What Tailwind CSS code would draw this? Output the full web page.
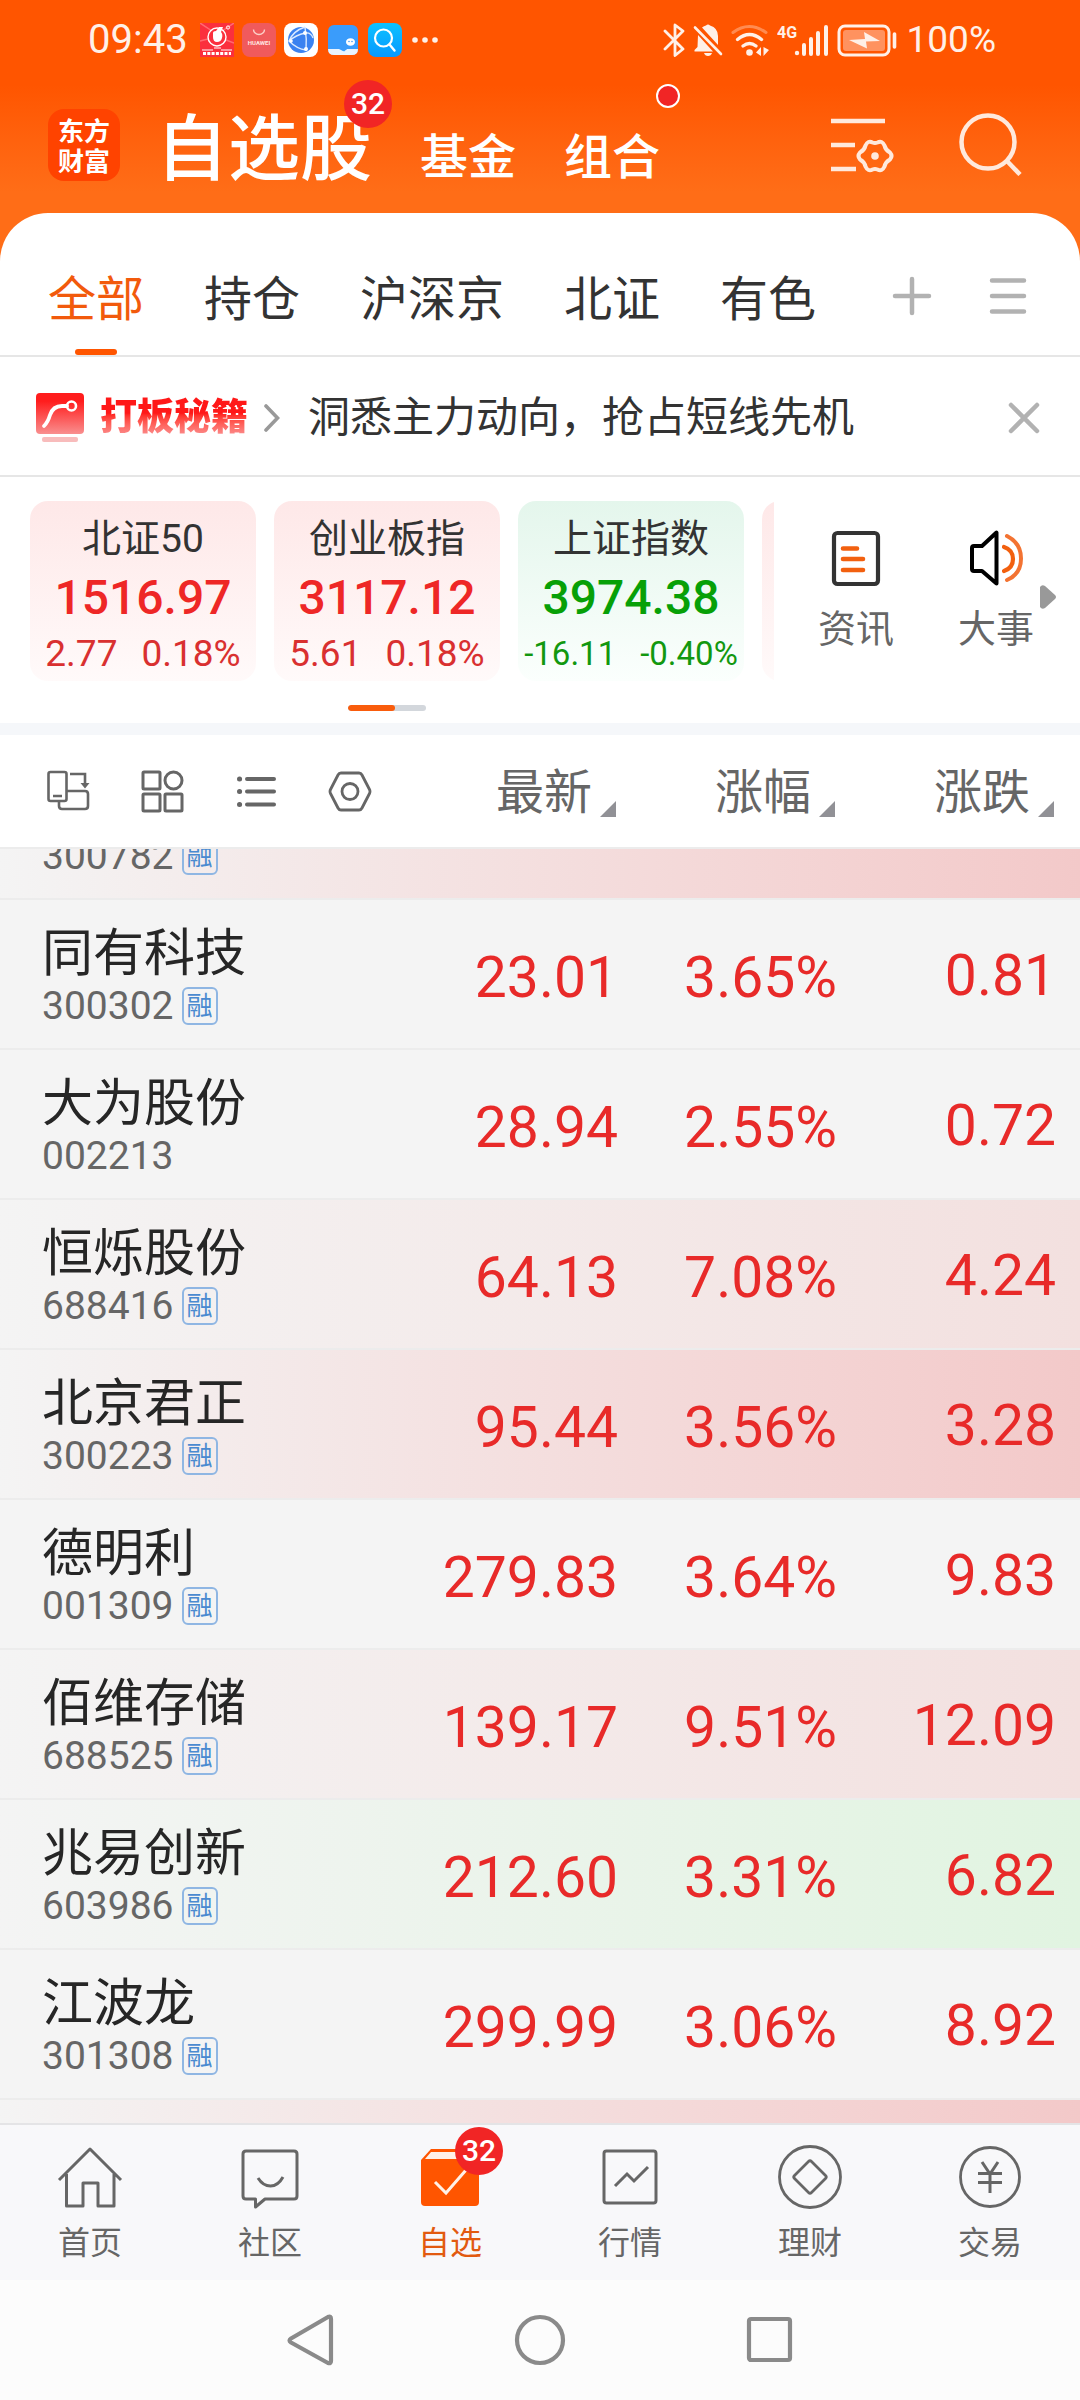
<!DOCTYPE html>
<html lang="zh-CN">
<head>
    <meta charset="UTF-8">
    <meta name="viewport" content="width=device-width, initial-scale=1.0">
    <title>自选股</title>
    <script src="https://cdn.jsdelivr.net/npm/@tailwindcss/browser@4"></script>
    <style>
      body {
        font-family: Roboto, "Noto Sans CJK SC", sans-serif;
      }
    </style>
</head>
<body class="h-screen flex flex-col overflow-hidden bg-white text-[#333]">

    <header class="bg-linear-to-b from-[#ff5500] from-40% to-[#ff6d17] to-90% text-white shrink-0">
        <!-- status bar -->
        <div class="h-20 flex items-center justify-between pl-[88px] pr-[84px] text-[#fff0e8]">
            <div class="flex items-center gap-2">
                <span class="text-[40px] leading-10 mr-1">09:43</span>
                <svg class="size-[34px]" viewBox="0 0 34 34">
                    <rect width="34" height="34" fill="#fb2f3d"/>
                    <path d="M0 0l12 8M34 0L22 8M0 18l8-2M34 20l-8-3" stroke="#ff6a70" stroke-width="1.5"/>
                    <circle cx="17" cy="14" r="9" fill="none" stroke="#fff" stroke-width="1.4"/>
                    <path d="M13 10q0-2 3-2l3-4h4l-2 5q2 2 1 6t-5 4q-4 0-4-5z" fill="#fff"/>
                    <circle cx="28" cy="4.500" r="1.600" fill="none" stroke="#fff"/>
                    <path d="M14 25h7M2 27h11M21 27h11" stroke="#fff" stroke-width="1.200"/>
                    <path d="M3 30.500h28" stroke="#fff" stroke-width="3" stroke-dasharray="3 1.300"/>
                </svg>
                <svg class="size-[34px]" viewBox="0 0 34 34">
                    <rect width="34" height="34" rx="8" fill="#f05a5c"/>
                    <path d="M11.500 6.500a5.500 5 0 0 0 11 0" fill="none" stroke="#fbd0c8" stroke-width="1.400"/>
                    <text x="17" y="22" text-anchor="middle" font-size="6" font-weight="700" fill="#ffe6e0">HUAWEI</text>
                </svg>
                <svg class="size-[34px]" viewBox="0 0 34 34">
                    <rect width="34" height="34" rx="8" fill="#fff"/>
                    <circle cx="17" cy="17" r="13" fill="#3b82f0"/>
                    <g fill="none" stroke="#dcebff" stroke-width="1.400">
                        <path d="M21 4Q9 8 5 18M21 10Q12 12 5 18Q13 26 22 27M21 4q2 12 1 24M21 10q6-1 8 5"/>
                    </g>
                    <g fill="#fff"><circle cx="21" cy="10" r="2"/><circle cx="7" cy="18" r="1.800"/><circle cx="22" cy="26" r="2"/></g>
                </svg>
                <svg class="size-[34px]" viewBox="0 0 34 34">
                    <rect x="2" y="2" width="30" height="30" rx="6" fill="#3a9cfb"/>
                    <path d="M2 26h11l4 2 4-2h11q0 6-6 6H8q-6 0-6-6z" fill="#eaf4ff"/>
                    <path d="M15 26h6l-3 2.500z" fill="#3a9cfb"/>
                    <ellipse cx="24.500" cy="19" rx="4.500" ry="3.800" fill="#fff"/>
                    <circle cx="23" cy="18.500" r=".8" fill="#3a9cfb"/><circle cx="26" cy="18.500" r=".8" fill="#3a9cfb"/>
                </svg>
                <svg class="size-[34px]" viewBox="0 0 34 34">
                    <defs><linearGradient id="sky" x2="0" y2="1"><stop stop-color="#0cc2ff"/><stop offset="1" stop-color="#0798ff"/></linearGradient></defs>
                    <rect width="34" height="34" rx="8" fill="url(#sky)"/>
                    <circle cx="15.500" cy="15" r="8.500" fill="none" stroke="#fff" stroke-width="2.200"/>
                    <path d="M21.500 21.500l5 6" stroke="#fff" stroke-width="2.400" stroke-linecap="round"/>
                </svg>
                <svg class="w-[34px] h-2" viewBox="0 0 34 8" fill="currentColor">
                    <circle cx="5" cy="4" r="2.800"/><circle cx="15" cy="4" r="2.800"/><circle cx="25" cy="4" r="2.800"/>
                </svg>
            </div>
            <div class="flex items-center gap-2">
                <svg class="w-[22px] h-[34px]" viewBox="0 0 22 34" fill="none" stroke="currentColor" stroke-width="2.800" stroke-linejoin="round" stroke-linecap="round">
                    <path d="M2 8l18 18-8 6.500V2l8 6L2 26"/>
                </svg>
                <svg class="w-[30px] h-[34px]" viewBox="0 0 30 34" fill="currentColor">
                    <path d="M9 4.500Q11 3 13 2.500q2-2 4 0 8 2.500 8 10.500v9zM5 12L20 28.500H1.500V27l3-3z"/>
                    <path d="M11 30h8q-1 3-4 3t-4-3z"/>
                    <path d="M2 4.500L28 31" stroke="currentColor" stroke-width="2.600" stroke-linecap="round"/>
                </svg>
                <svg class="w-[38px] h-[34px]" viewBox="0 0 38 34" fill="none" stroke="currentColor" stroke-linecap="round">
                    <path d="M2 9.500q16-12 33 0" stroke-width="3" opacity=".35"/>
                    <path d="M6.500 16.500q12-10 24 0M12 23q6.500-5 13 0" stroke-width="3.400"/>
                    <circle cx="18.500" cy="29.500" r="3.300" fill="currentColor" stroke="none"/>
                    <path d="M30 24v9l-5-3.500zM32.500 24v9l5.500-6z" fill="currentColor" stroke="none"/>
                </svg>
                <svg class="w-[52px] h-[34px]" viewBox="0 0 52 34" fill="currentColor">
                    <text x="0" y="15" font-size="16" font-weight="700">4G</text>
                    <circle cx="20" cy="30" r="2.200"/>
                    <path d="M27 22v9M34 16v15M41 10v21M49 4v27" stroke="currentColor" stroke-width="4" stroke-linecap="round"/>
                </svg>
                <svg class="w-[62px] h-[34px]" viewBox="0 0 62 34" fill="none">
                    <rect x="2" y="3" width="50" height="29" rx="6" stroke="currentColor" stroke-width="3"/>
                    <rect x="6" y="7" width="42" height="21" rx="3" fill="#ff925f"/>
                    <path d="M12 17l16-1-1-7 16 9-14 .5 1 7z" fill="currentColor"/>
                    <path d="M57.500 11v13" stroke="currentColor" stroke-width="3.600" stroke-linecap="round"/>
                </svg>
                <span class="text-[37px] leading-10">100%</span>
            </div>
        </div>

        <!-- title bar -->
        <div class="h-[133px] flex items-start pl-12 pr-[58px] pt-6">
            <div class="size-[72px] mt-[5px] rounded-[16px] bg-[#ff4300] flex flex-col items-center justify-center pt-1 text-[26px] leading-[30px] font-bold">
                <span>东方</span>
                <span>财富</span>
            </div>
            <nav class="flex items-baseline ml-9 mt-1 gap-12">
                <a href="#" class="relative text-[72px] leading-[84px] font-medium">自选股
                    <span class="absolute -top-7 -right-5 size-12 rounded-full bg-[#f12525] text-[30px] leading-[48px] text-center font-medium">32</span>
                </a>
                <a href="#" class="text-[48px] leading-[60px] font-medium">基金</a>
                <a href="#" class="relative text-[48px] leading-[60px] font-medium">组合
                    <span class="absolute -top-11 -right-5 size-6 rounded-full bg-[#f12525] border-2 border-white"></span>
                </a>
            </nav>
            <div class="ml-auto flex gap-16 pt-2 text-[#ffe9dc]">
                <button aria-label="管理">
                    <svg class="size-16" viewBox="0 0 64 64" fill="none" stroke="currentColor" stroke-width="4.500">
                        <path d="M1 9h54M1 33h24M1 57h25"/>
                        <path d="M60 40.500Q63 44 60 47.500Q55.500 50 54.500 54.500Q52 60 47.500 57.500Q45 56.500 42.500 57.500Q38 60 35.500 54.500Q34.500 50 30 47.500Q27 44 30 40.500Q34.500 38 35.500 33.500Q38 28 42.500 30.500Q45 31.500 47.500 30.500Q52 28 54.500 33.500Q55.500 38 60 40.500z" stroke-width="4"/>
                        <circle cx="45" cy="44" r="3.800" fill="currentColor" stroke="none"/>
                    </svg>
                </button>
                <button aria-label="搜索">
                    <svg class="size-16" viewBox="0 0 64 64" fill="none" stroke="currentColor" stroke-width="4.500">
                        <circle cx="30" cy="30" r="26.500"/>
                        <path d="M49 49l13 13.500"/>
                    </svg>
                </button>
            </div>
        </div>
    </header>

    <!-- group tabs, the header colour shows behind the rounded corners -->
    <div class="bg-[#ff6d17] shrink-0">
        <div class="h-36 bg-white rounded-t-[48px] border-b-2 border-[#e6e6e6] flex items-center justify-between pl-12 pr-[52px]">
            <nav class="flex gap-[60px] h-full text-[48px] leading-[72px]">
                <a href="#" class="relative flex items-center pt-9 pb-1 text-[#f25a0c]">全部
                    <span class="absolute bottom-0 left-1/2 -translate-x-1/2 w-[42px] h-1.5 rounded-full bg-[#ff5500]"></span>
                </a>
                <a href="#" class="flex items-center pt-9 pb-1">持仓</a>
                <a href="#" class="flex items-center pt-9 pb-1">沪深京</a>
                <a href="#" class="flex items-center pt-9 pb-1">北证</a>
                <a href="#" class="flex items-center pt-9 pb-1">有色</a>
            </nav>
            <div class="flex gap-14 pt-6">
                <button aria-label="添加分组">
                    <svg class="size-10" viewBox="0 0 40 40" stroke="#b2b2b2" stroke-width="4.500" stroke-linecap="round"><path d="M20 3v34M3 20h34"/></svg>
                </button>
                <button aria-label="分组管理">
                    <svg class="size-10" viewBox="0 0 40 40" stroke="#b2b2b2" stroke-width="4.500" stroke-linecap="round"><path d="M4 4.500h32M4 20h32M4 35.500h32"/></svg>
                </button>
            </div>
        </div>
    </div>

    <!-- promo banner -->
    <div class="h-[120px] shrink-0 flex items-center border-b-2 border-[#e6e6e6] pl-9 pr-10 pt-1">
        <svg class="w-12 h-[50px]" viewBox="0 0 48 50">
            <defs><linearGradient id="promo" x2="0" y2="1"><stop offset=".2" stop-color="#ff1d1d"/><stop offset="1" stop-color="#f98f8f"/></linearGradient></defs>
            <rect width="48" height="41" rx="4" fill="url(#promo)"/>
            <path d="M8 33q4-4 6-11 3-9 12-9h5" fill="none" stroke="#fff" stroke-width="3.800" stroke-linecap="round"/>
            <circle cx="35.500" cy="13" r="4.500" fill="none" stroke="#fff" stroke-width="2.600"/>
            <rect x="6" y="44" width="36" height="5" rx="2" fill="#f8bcbc"/>
        </svg>
        <span class="ml-4 text-[37px] leading-[48px] font-black bg-linear-to-b from-[#ff1818] from-40% to-[#fb8a8a] to-85% bg-clip-text text-transparent">打板秘籍</span>
        <svg class="w-4 h-7 ml-4" viewBox="0 0 16 28" fill="none" stroke="#999" stroke-width="3.600" stroke-linecap="round"><path d="M2 2l11.500 12L2 26"/></svg>
        <a href="#" class="ml-7 text-[42px] leading-[60px]">洞悉主力动向，抢占短线先机</a>
        <button class="ml-auto" aria-label="关闭">
            <svg class="size-8" viewBox="0 0 32 32" stroke="#b2b2b2" stroke-width="4.500" stroke-linecap="round"><path d="M3 3l26 26M29 3L3 29"/></svg>
        </button>
    </div>

    <!-- index cards and shortcuts -->
    <section class="shrink-0 h-[258px] pt-6 flex border-b-12 border-[#f5f7fa]">
        <div class="w-[774px] shrink-0">
            <div class="flex gap-[18px] pl-[30px] overflow-hidden">
                <div class="w-[226px] h-[180px] shrink-0 rounded-[18px] bg-linear-to-b from-[#fee8e8] to-[#fffafa] flex flex-col items-center pt-2 text-[#d93030]">
                    <span class="text-[39px] leading-[60px] text-[#333]">北证50</span>
                    <span class="text-[48px] leading-[58px] font-medium text-[#ee2726]">1516.97</span>
                    <span class="flex gap-6 text-[37px] leading-[54px]"><span>2.77</span><span>0.18%</span></span>
                </div>
                <div class="w-[226px] h-[180px] shrink-0 rounded-[18px] bg-linear-to-b from-[#fee8e8] to-[#fffafa] flex flex-col items-center pt-2 text-[#d93030]">
                    <span class="text-[39px] leading-[60px] text-[#333]">创业板指</span>
                    <span class="text-[48px] leading-[58px] font-medium text-[#ee2726]">3117.12</span>
                    <span class="flex gap-6 text-[37px] leading-[54px]"><span>5.61</span><span>0.18%</span></span>
                </div>
                <div class="w-[226px] h-[180px] shrink-0 rounded-[18px] bg-linear-to-b from-[#e4f6ec] to-[#fbfffd] flex flex-col items-center pt-2 text-[#12980f]">
                    <span class="text-[39px] leading-[60px] text-[#333]">上证指数</span>
                    <span class="text-[48px] leading-[58px] font-medium text-[#07a007]">3974.38</span>
                    <span class="flex gap-6 text-[33px] leading-[54px]"><span>-16.11</span><span>-0.40%</span></span>
                </div>
                <div class="w-[226px] h-[180px] shrink-0 rounded-[18px] bg-linear-to-b from-[#fee8e8] to-[#fffafa]"></div>
            </div>
            <div class="mx-auto mt-6 w-[78px] h-1.5 rounded-full bg-[#d3d7dc] overflow-hidden">
                <div class="w-[47px] h-full rounded-full bg-[#f95c0c]"></div>
            </div>
        </div>
        <div class="flex-1 flex items-start pt-7 pl-11 gap-16">
            <a href="#" class="flex flex-col items-center gap-3.5 text-[38px] leading-[56px] text-[#666]">
                <svg class="w-[50px] h-[58px]" viewBox="0 0 50 58" fill="none">
                    <rect x="3" y="4" width="44" height="51" rx="3.500" stroke="#333" stroke-width="4.200"/>
                    <path d="M12 19.500h14M12 30h20M12 41h20" stroke="#f2600f" stroke-width="4.600" stroke-linecap="round"/>
                </svg>
                资讯
            </a>
            <a href="#" class="flex flex-col items-center gap-3.5 text-[38px] leading-[56px] text-[#666]">
                <svg class="w-[54px] h-[58px]" viewBox="0 0 54 58" fill="none" stroke-linecap="round" stroke-linejoin="round">
                    <path d="M27.500 3.500v51L13 42H5q-2 0-2-2V19q0-2 2-2h8z" stroke="#000" stroke-width="4"/>
                    <path d="M35 18q9 3 9 12t-9 12" stroke="#f2600f" stroke-width="4.200"/>
                    <path d="M38 7q14 7 14 22.500T38 51" stroke="#f37332" stroke-width="4"/>
                </svg>
                大事
            </a>
            <svg class="w-4 h-6 mt-14 -ml-[58px]" viewBox="0 0 16 24" fill="#999"><path d="M0 2q2-3 5-1l10 9q2 2 0 4L5 23q-3 2-5-1z"/></svg>
        </div>
    </section>

    <!-- column headings -->
    <div class="h-[114px] shrink-0 flex items-center pl-[46px] pr-[26px] border-b-2 border-[#ececec]">
        <div class="flex gap-[50px] text-[#666]">
            <button aria-label="横屏">
                <svg class="size-11" viewBox="0 0 44 44" fill="none" stroke="currentColor" stroke-width="2.600">
                    <rect x="2.500" y="3" width="18" height="29" rx="2"/>
                    <path d="M7 27h9M21 22h18q3 0 3 3v12q0 3-3 3H16q-3 0-3-3v-5M24 5h15v12"/>
                    <path d="M34.500 14h9L39 19.500z" fill="currentColor" stroke="none"/>
                </svg>
            </button>
            <button aria-label="宫格">
                <svg class="size-11" viewBox="0 0 44 44" fill="none" stroke="currentColor" stroke-width="3">
                    <rect x="3" y="3" width="17" height="17" rx="1"/><circle cx="33.500" cy="11.500" r="8.500"/>
                    <rect x="3" y="25" width="17" height="17" rx="1"/><rect x="25" y="25" width="17" height="17" rx="1"/>
                </svg>
            </button>
            <button aria-label="列表">
                <svg class="size-11" viewBox="0 0 44 44" stroke="currentColor" stroke-width="4" stroke-linecap="round">
                    <path d="M13 10h27M13 22.500h27M13 35.500h27"/>
                    <path d="M5.500 10h.1M5.500 22.500h.1M5.500 35.500h.1" stroke-width="5"/>
                </svg>
            </button>
            <button aria-label="设置">
                <svg class="size-11" viewBox="0 0 44 44" fill="none" stroke="currentColor" stroke-width="2.800" stroke-linejoin="round">
                    <path d="M13 4h18q2 0 3 2l7.500 14.500q1 2 0 4L34 39q-1 2-3 2H13q-2 0-3-2L2.500 24.500q-1-2 0-4L10 6q1-2 3-2z"/>
                    <circle cx="22" cy="22.500" r="8"/>
                </svg>
            </button>
        </div>
        <div class="ml-auto flex pt-1 text-[48px] leading-[72px] text-[#666]">
            <button class="w-[219px] flex justify-end items-end gap-2">最新
                <svg class="size-4 mb-3" viewBox="0 0 16 16" fill="#919196"><path d="M16 0v16H0z"/></svg>
            </button>
            <button class="w-[219px] flex justify-end items-end gap-2">涨幅
                <svg class="size-4 mb-3" viewBox="0 0 16 16" fill="#919196"><path d="M16 0v16H0z"/></svg>
            </button>
            <button class="w-[219px] flex justify-end items-end gap-2">涨跌
                <svg class="size-4 mb-3" viewBox="0 0 16 16" fill="#919196"><path d="M16 0v16H0z"/></svg>
            </button>
        </div>
    </div>

    <!-- stock list, scrolled part of a row down -->
    <main class="flex-1 min-h-0 overflow-hidden bg-[#f4f4f4]">
        <table class="w-full table-fixed -mt-[100px]">
            <colgroup><col><col class="w-[219px]"><col class="w-[219px]"><col class="w-[243px]"></colgroup>
            <tbody id="stock-list"></tbody>
        </table>
    </main>

    <!-- bottom tabs -->
    <nav class="h-[157px] shrink-0 grid grid-cols-6 bg-[#f8f8fa] border-t-2 border-[#e4e4e6] text-[32px] leading-[44px] text-[#666]">
        <a href="#" class="flex flex-col items-center pt-5 gap-3">
            <svg class="w-[66px] h-[64px]" viewBox="0 0 66 64" fill="none" stroke="currentColor" stroke-width="3" stroke-linejoin="round">
                <path d="M2 35L33 4l31 31M9.500 29v32H26V38h15v23h16V29"/>
            </svg>
            首页
        </a>
        <a href="#" class="flex flex-col items-center pt-5 gap-3">
            <svg class="w-[66px] h-[64px]" viewBox="0 0 66 64" fill="none" stroke="currentColor" stroke-width="3" stroke-linejoin="round">
                <path d="M9 6h48q3 0 3 3v42q0 3-3 3H28l-9.500 8V54H9q-3 0-3-3V9q0-3 3-3z"/>
                <path d="M21 33q5 8 12.500 8T46 32"/>
            </svg>
            社区
        </a>
        <a href="#" class="flex flex-col items-center pt-5 gap-3 text-[#e25a10]">
            <span class="relative">
                <svg class="w-[66px] h-[64px]" viewBox="0 0 66 64">
                    <path d="M4 15L14 4h40l8 11v42q0 4-4 4H8q-4 0-4-4z" fill="#ff5500"/>
                    <path d="M14 7h38l4 7H8z" fill="#fff1e8"/>
                    <path d="M18 37l11 11 20-23" fill="none" stroke="#fff1e8" stroke-width="3"/>
                </svg>
                <span class="absolute -top-[18px] -right-5 size-12 rounded-full bg-[#f12525] text-white text-[30px] leading-[48px] text-center font-medium">32</span>
            </span>
            自选
        </a>
        <a href="#" class="flex flex-col items-center pt-5 gap-3">
            <svg class="w-[66px] h-[64px]" viewBox="0 0 66 64" fill="none" stroke="currentColor" stroke-width="3">
                <rect x="7" y="6" width="52" height="52" rx="2.500"/>
                <path d="M18 41l12-12 7 7 14-14"/>
            </svg>
            行情
        </a>
        <a href="#" class="flex flex-col items-center pt-5 gap-3">
            <svg class="w-[66px] h-[64px]" viewBox="0 0 66 64" fill="none" stroke="currentColor" stroke-width="2.800" stroke-linejoin="round">
                <circle cx="33" cy="32" r="30.500"/>
                <path d="M34.500 16.500l14 14q1.500 1.500 0 3l-14 14q-1.500 1.500-3 0l-14-14q-1.500-1.500 0-3l14-14q1.500-1.500 3 0z"/>
            </svg>
            理财
        </a>
        <a href="#" class="flex flex-col items-center pt-5 gap-3">
            <svg class="w-[66px] h-[64px]" viewBox="0 0 66 64" fill="none" stroke="currentColor" stroke-width="3">
                <circle cx="33" cy="32" r="29.500" stroke-width="2.800"/>
                <path d="M25 17l8 12 8-12M21 28.500h24M21 37.500h24M33 28v20"/>
            </svg>
            交易
        </a>
    </nav>

    <!-- system navigation -->
    <div class="h-[120px] shrink-0 bg-[#fcfcfc] flex items-center justify-center gap-[178px] text-[#8a8a8a]">
        <button aria-label="返回">
            <svg class="size-[52px]" viewBox="0 0 52 52" fill="none" stroke="currentColor" stroke-width="4.200" stroke-linejoin="round"><path d="M44 3q3-1.500 3 2v42q0 3-3 2L7 28.500q-3-2 0-4z"/></svg>
        </button>
        <button aria-label="主页">
            <svg class="size-[52px]" viewBox="0 0 52 52" fill="none" stroke="currentColor" stroke-width="4.200"><circle cx="26" cy="26" r="23"/></svg>
        </button>
        <button aria-label="最近任务">
            <svg class="size-[52px]" viewBox="0 0 52 52" fill="none" stroke="currentColor" stroke-width="4.200"><rect x="5" y="5" width="41" height="41" rx="2"/></svg>
        </button>
    </div>

    <script>
    // name, code, margin flag, price, change %, change, row tint
    const stocks = [
        ['', '300782', true, '', '', '', 'strong'],
        ['同有科技', '300302', true, '23.01', '3.65%', '0.81', 'none'],
        ['大为股份', '002213', false, '28.94', '2.55%', '0.72', 'none'],
        ['恒烁股份', '688416', true, '64.13', '7.08%', '4.24', 'light'],
        ['北京君正', '300223', true, '95.44', '3.56%', '3.28', 'strong'],
        ['德明利', '001309', true, '279.83', '3.64%', '9.83', 'none'],
        ['佰维存储', '688525', true, '139.17', '9.51%', '12.09', 'light'],
        ['兆易创新', '603986', true, '212.60', '3.31%', '6.82', 'green'],
        ['江波龙', '301308', true, '299.99', '3.06%', '8.92', 'none'],
        ['', '', false, '', '', '', 'strong'],
    ];

    const tints = {
        none: 'bg-[#f4f4f4]',
        light: 'bg-linear-to-r from-[#f4f4f4] to-[#f3e0df]',
        strong: 'bg-linear-to-r from-[#f4f4f4] to-[#f3c9c9]',
        green: 'bg-linear-to-r from-[#f4f4f4] to-[#e1f4e1]',
    };

    const flag = '<span class="w-9 h-[38px] rounded-[6px] border-2 border-[#8fb6e3] text-[#4a8ad0] text-[26px] leading-[34px] text-center">融</span>';

    document.getElementById('stock-list').innerHTML = stocks.map(([name, code, margin, price, pct, diff, tint]) => `
        <tr class="h-[150px] border-b-2 border-[#ececec] ${tints[tint]}">
            <th scope="row" class="pl-[42px] pt-1 text-left font-normal">
                <div class="h-[60px] text-[51px] leading-[60px] text-[#262626]">${name}</div>
                <div class="flex items-center gap-2 h-11 text-[39px] leading-[44px] text-[#666]">${code}${margin ? flag : ''}</div>
            </th>
            <td class="pt-2 text-right text-[57px] leading-[72px] text-[#e82a29]">${price}</td>
            <td class="pt-2 text-right text-[57px] leading-[72px] text-[#e82a29]">${pct}</td>
            <td class="pt-1 pr-6 text-right text-[57px] leading-[72px] text-[#e82a29]">${diff}</td>
        </tr>`).join('');
    </script>
</body>
</html>
